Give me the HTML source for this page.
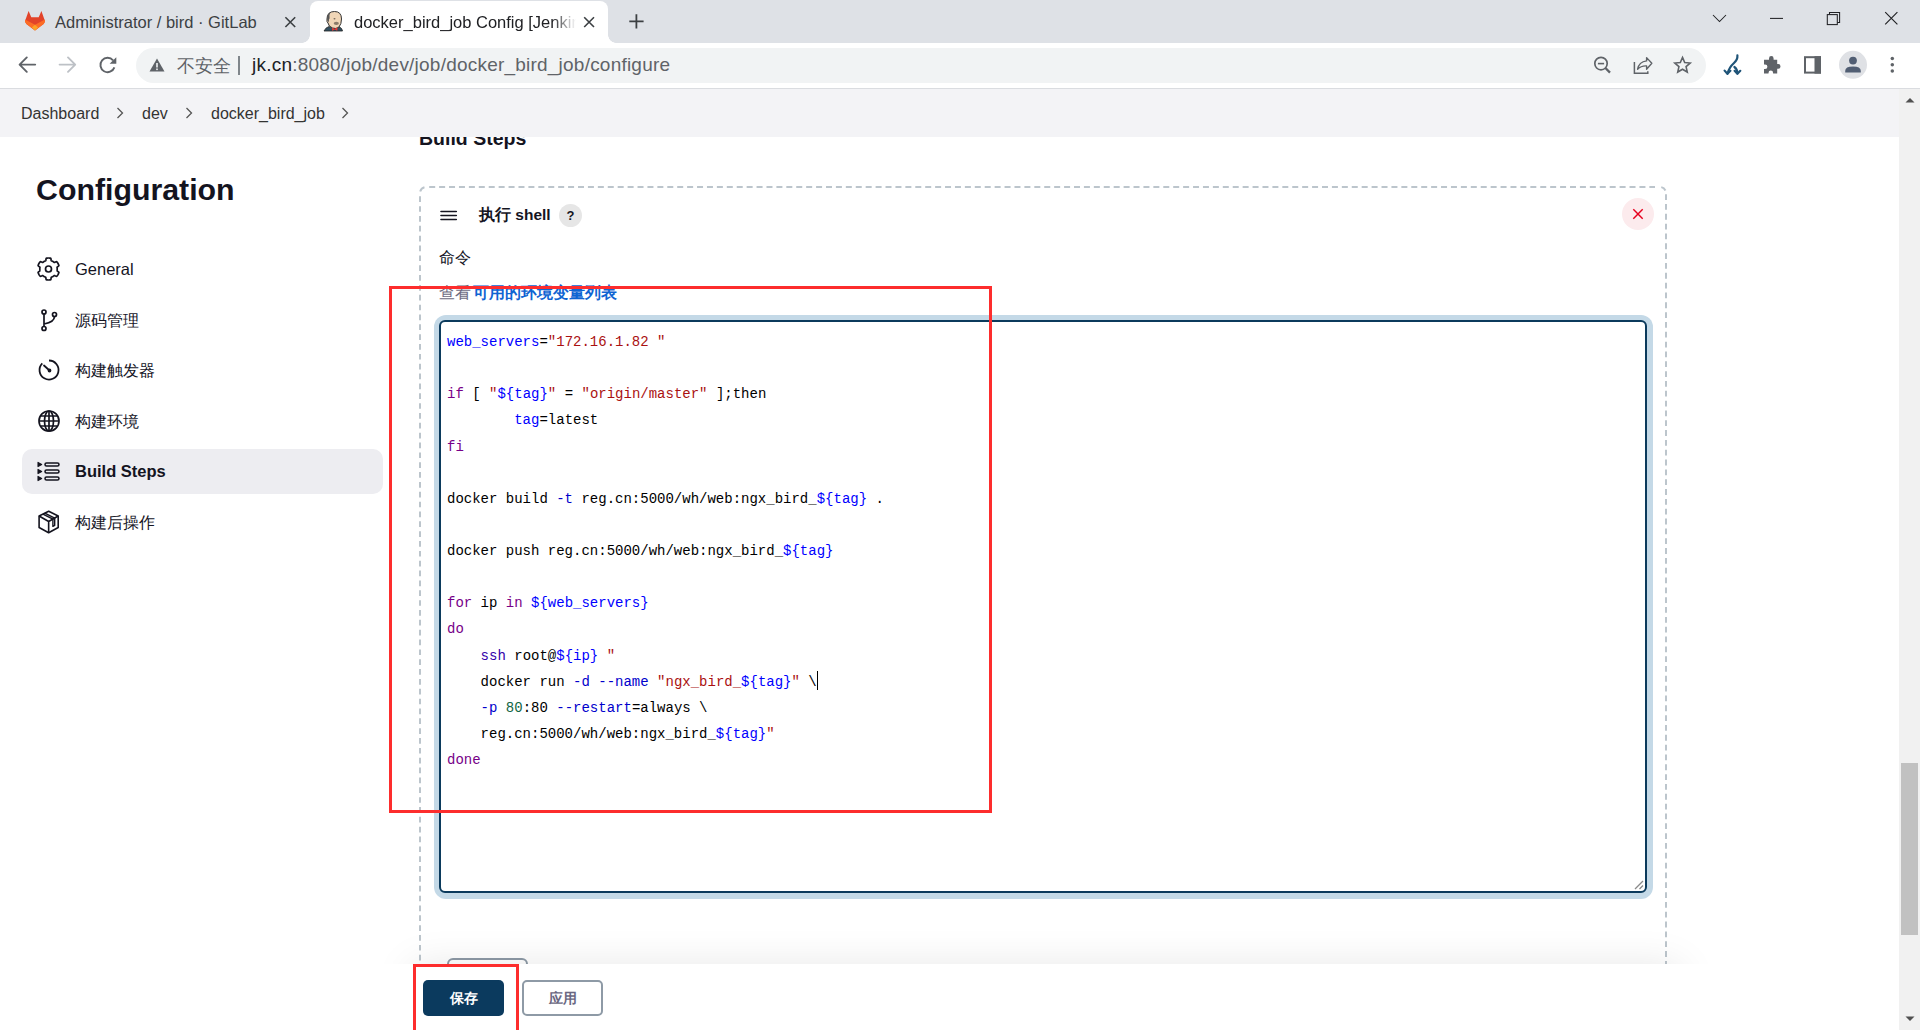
<!DOCTYPE html>
<html><head><meta charset="utf-8">
<style>
*{box-sizing:border-box;margin:0;padding:0}
html,body{width:1920px;height:1030px;overflow:hidden;background:#fff;font-family:"Liberation Sans",sans-serif;color:#14141f}
.abs{position:absolute}
/* chrome */
#tabstrip{position:absolute;left:0;top:0;width:1920px;height:43px;background:#dee1e6}
#toolbar{position:absolute;left:0;top:43px;width:1920px;height:45px;background:#fff}
#sep{position:absolute;left:0;top:88px;width:1920px;height:1px;background:#dadce0}
.tab{position:absolute;top:0;height:43px;font-size:15px;color:#202124}
#tab2{left:310px;width:298px;top:1px;height:42px;background:#fff;border-radius:8px 8px 0 0}
#tab2:before,#tab2:after{content:"";position:absolute;bottom:0;width:8px;height:8px;background:radial-gradient(circle at 0 0,transparent 8px,#fff 8.5px)}
#tab2:before{left:-8px;background:radial-gradient(circle at 0 0,transparent 7.5px,#fff 8px)}
#tab2:after{right:-8px;background:radial-gradient(circle at 100% 0,transparent 7.5px,#fff 8px)}
#omni{position:absolute;left:136px;top:48px;width:1570px;height:35px;border-radius:17.5px;background:#f1f3f4}
/* page */
#bc{position:absolute;z-index:5;left:0;top:89px;width:1899px;height:48px;background:#f3f3f6;font-size:16px;color:#14141f}
#scroll{position:absolute;left:1899px;top:89px;width:21px;height:941px;background:#f1f1f1}
#thumb{position:absolute;left:2px;top:674px;width:17px;height:172px;background:#c1c1c1}
.side{position:absolute;left:75px;font-size:16px;color:#14141f}
.code{position:absolute;left:447px;font-family:"Liberation Mono",monospace;font-size:14px;white-space:pre;color:#000}
.code{line-height:26.12px}.cur{display:inline-block;width:1px;height:19px;background:#000;vertical-align:-4px;margin-left:0}
.kw{color:#708}.df{color:#00f}.st{color:#a11}.at{color:#00c}.bi{color:#30a}.nu{color:#164}
</style></head><body>
<div id="tabstrip"></div>
<div id="toolbar"></div>
<div id="sep"></div>
<div id="tab2" class="tab"></div>
<div id="omni"></div>
<!-- tab 1 -->
<svg class="abs" style="left:24px;top:10px" width="22" height="22" viewBox="0 0 22 22">
 <path d="M4.6 1.1L7.3 7.2H14.7L17.4 1.1L20.7 10.3Q21.4 12.6 19.6 14L11 20.6L2.4 14Q0.6 12.6 1.3 10.3Z" fill="#e24329"/>
 <path d="M1 9.6L11 14.8V20.6L2.4 14Q0.5 12.5 1 9.6Z" fill="#fc6d26"/>
 <path d="M21 9.6L11 14.8V20.6L19.6 14Q21.5 12.5 21 9.6Z" fill="#fc6d26"/>
 <path d="M11 14.8L14.1 17.6L11 20.6L7.9 17.6Z" fill="#fca326"/>
</svg>
<div class="abs" style="left:55px;top:13px;font-size:16.5px;color:#3c4043;white-space:nowrap">Administrator / bird · GitLab</div>
<svg class="abs" style="left:283px;top:15px" width="14" height="14" viewBox="0 0 14 14"><path d="M2.4 2.2L12.2 12M12.2 2.2L2.4 12" stroke="#3c4043" stroke-width="1.6"/></svg>
<!-- tab 2 icon (jenkins) -->
<svg class="abs" style="left:323px;top:10px" width="22" height="22" viewBox="0 0 22 22">
 <path d="M1 21Q2.5 17.5 6 16.5L10 18L14 16.5Q18.5 16.5 19.5 21Z" fill="#335061" stroke="#222" stroke-width="0.8"/>
 <path d="M4 9Q4 1.5 11.5 1.5Q18.5 1.5 18.5 9Q18.5 14 16 17Q13 19.5 9.5 18Q5.5 16.5 5 13Q3.5 12 4 9Z" fill="#f0d6b7" stroke="#333" stroke-width="1"/>
 <path d="M4.2 9.5Q3.5 4 7.5 2.5Q5.8 5 6.6 8.2Q5.5 9.5 6 12Q4.5 11.5 4.2 9.5Z" fill="#555"/>
 <ellipse cx="13.3" cy="13.3" rx="2.6" ry="1.6" fill="#8a7a68"/>
 <ellipse cx="11.5" cy="8.8" rx="1" ry="0.8" fill="#7a6a5a"/>
 <path d="M9 17.5L11.5 19L14.5 17.2L14.3 20.8L11.5 19.5L9.3 21Z" fill="#e53935"/>
</svg>
<div class="abs" style="left:354px;top:13px;width:222px;overflow:hidden;font-size:16.5px;color:#202124;white-space:nowrap;-webkit-mask-image:linear-gradient(90deg,#000 calc(100% - 24px),transparent 100%)">docker_bird_job Config [Jenkins]</div>
<svg class="abs" style="left:582px;top:15px" width="14" height="14" viewBox="0 0 14 14"><path d="M2.2 2.2L12 12M12 2.2L2.2 12" stroke="#3c4043" stroke-width="1.6"/></svg>
<svg class="abs" style="left:626px;top:11px" width="20" height="20" viewBox="0 0 20 20"><path d="M10.4 3.2V17.5M3.3 10.4H17.6" stroke="#3c4043" stroke-width="1.8"/></svg>
<!-- window controls -->
<svg class="abs" style="left:1700px;top:0" width="220" height="40" viewBox="0 0 220 40" fill="none" stroke="#202124" stroke-width="1.05">
 <path d="M13 15L19.5 21.5L26 15"/>
 <path d="M70 18.4H83"/>
 <rect x="127.3" y="14.6" width="10" height="10"/>
 <path d="M129.5 14.6V12.4H139.6V22.5H137.3"/>
 <path d="M185.2 12.2L197.4 24.4M197.4 12.2L185.2 24.4" stroke-width="1.15"/>
</svg>
<!-- toolbar nav -->
<svg class="abs" style="left:10px;top:48px" width="120" height="36" viewBox="0 0 120 36" fill="none" stroke-width="1.9" stroke-linecap="round" stroke-linejoin="round">
 <path d="M25.2 16.6H9.8M16.8 9.4L9.6 16.6L16.8 23.8" stroke="#5f6368"/>
 <path d="M49.6 16.6H65M58 9.4L65.2 16.6L58 23.8" stroke="#bdc1c6"/>
 <path d="M104.4 19.4A7.2 7.2 0 1 1 103.1 12.3" stroke="#5f6368" stroke-linecap="butt"/>
 <path d="M99.6 15.8L106.3 9.2V15.8Z" fill="#5f6368" stroke="none"/>
</svg>
<!-- omnibox content -->
<svg class="abs" style="left:149px;top:57px" width="16" height="16" viewBox="0 0 16 16"><path d="M8 1.5L15.5 14.5H0.5Z" fill="#5f6368"/><rect x="7.2" y="6" width="1.6" height="4.5" fill="#f1f3f4"/><rect x="7.2" y="11.5" width="1.6" height="1.6" fill="#f1f3f4"/></svg>
<div class="abs" style="left:177px;top:54px;font-size:18px;color:#5f6368;white-space:nowrap">不安全</div>
<div class="abs" style="left:238px;top:56px;width:1.5px;height:19px;background:#80868b"></div>
<div class="abs" style="left:252px;top:54px;font-size:19px;letter-spacing:0.22px;color:#5f6368;white-space:nowrap"><span style="color:#202124">jk.cn</span>:8080/job/dev/job/docker_bird_job/configure</div>
<!-- omnibox right icons -->
<svg class="abs" style="left:1585px;top:48px" width="120" height="36" viewBox="0 0 120 36" fill="none" stroke="#5f6368">
 <circle cx="16" cy="15.6" r="6.2" stroke-width="1.7"/><path d="M12.9 15.6H19.1" stroke-width="1.6"/><path d="M20.4 20L25 24.6" stroke-width="2.3"/>
 <path d="M49.4 14V25.3H62.8V23.2" stroke-width="1.5"/>
 <path d="M52.6 21.2Q54 13.8 61.6 12.9V9.6L66.8 15.3L61.6 21.3V17.9Q56 17.6 52.6 21.2Z" stroke-width="1.4" stroke-linejoin="round"/>
 <path d="M97.50 9.40 L99.70 14.47 L105.20 15.00 L101.07 18.66 L102.26 24.05 L97.50 21.25 L92.74 24.05 L93.93 18.66 L89.80 15.00 L95.30 14.47Z" stroke-width="1.6" stroke-linejoin="miter"/>
</svg>
<!-- extension icons -->
<svg class="abs" style="left:1715px;top:45px" width="200" height="43" viewBox="0 0 200 43" fill="none">
 <path d="M22.4 10.4Q22.8 14.5 19 18Q14 22.5 12.5 28.6" stroke="#1f5478" stroke-width="2.2" stroke-linecap="round"/>
 <path d="M9.6 25.6L12.4 28.8L15.4 25.8" stroke="#1f5478" stroke-width="2.2" stroke-linecap="round" stroke-linejoin="round"/>
 <path d="M19.4 22Q22.3 23.8 22.4 28.4" stroke="#1f5478" stroke-width="2.2" stroke-linecap="round"/>
 <path d="M19.6 25.8L22.4 28.8L25.3 25.8" stroke="#1f5478" stroke-width="2.2" stroke-linecap="round" stroke-linejoin="round"/>
 <path d="M49 14.7H54V13.4A2.3 2.3 0 0 1 58.6 13.4V14.7H62.2V19.1H63.2A2.3 2.3 0 0 1 63.2 23.7H62.2V28.6H58.1V27.9A2.3 2.3 0 0 0 53.5 27.9V28.6H49V24.1H50.1A2.3 2.3 0 0 0 50.1 19.5H49Z" fill="#5f6368"/>
 <rect x="90" y="12.2" width="15" height="15.4" stroke="#5f6368" stroke-width="2"/><rect x="99.5" y="11.2" width="6.5" height="17.4" fill="#5f6368"/>
 <circle cx="138" cy="19.8" r="14" fill="#dfe1e5"/>
 <circle cx="138" cy="15.6" r="3.9" fill="#515e73"/>
 <path d="M130.2 27.6V26Q130.2 21.6 138 21.6Q145.8 21.6 145.8 26V27.6Z" fill="#515e73"/>
 <circle cx="177.3" cy="13.6" r="1.75" fill="#5f6368"/><circle cx="177.3" cy="19.8" r="1.75" fill="#5f6368"/><circle cx="177.3" cy="26" r="1.75" fill="#5f6368"/>
</svg>



<div id="content" class="abs" style="left:0;top:89px;width:1900px;height:941px;overflow:hidden">
 <div class="abs" style="left:419px;top:38px;font-size:19.5px;font-weight:bold;color:#14141f;white-space:nowrap">Build Steps</div>
 <div class="abs" style="left:36px;top:84px;font-size:30.3px;font-weight:bold;color:#14141f;white-space:nowrap">Configuration</div>
 <!-- sidebar -->
 <div class="abs" style="left:22px;top:360px;width:361px;height:45px;border-radius:10px;background:#ededf1"></div>
 <svg class="abs" style="left:36px;top:168px" width="25" height="24" viewBox="0 0 24 24" fill="none" stroke="#14141f" stroke-width="1.7" stroke-linejoin="round"><path d="M20.70 12.00 L20.70 12.23 L20.69 12.46 L20.67 12.68 L20.65 12.91 L20.63 13.14 L20.59 13.36 L20.55 13.59 L20.59 13.83 L20.96 14.15 L21.51 14.55 L22.06 14.98 L22.38 15.37 L22.37 15.67 L22.27 15.94 L22.16 16.21 L22.05 16.47 L21.93 16.74 L21.80 16.99 L21.67 17.25 L21.53 17.50 L21.38 17.75 L21.23 17.99 L21.07 18.23 L20.90 18.47 L20.73 18.70 L20.55 18.92 L20.36 19.14 L20.11 19.31 L19.61 19.22 L18.97 18.97 L18.34 18.68 L17.88 18.53 L17.65 18.62 L17.48 18.76 L17.30 18.90 L17.11 19.04 L16.93 19.17 L16.74 19.30 L16.55 19.42 L16.35 19.53 L16.15 19.65 L15.95 19.75 L15.75 19.85 L15.54 19.95 L15.33 20.04 L15.12 20.12 L14.90 20.20 L14.71 20.35 L14.62 20.83 L14.55 21.51 L14.45 22.20 L14.27 22.68 L14.00 22.82 L13.72 22.86 L13.44 22.91 L13.15 22.94 L12.86 22.97 L12.58 22.98 L12.29 23.00 L12.00 23.00 L11.71 23.00 L11.42 22.98 L11.14 22.97 L10.85 22.94 L10.56 22.91 L10.28 22.86 L10.00 22.82 L9.73 22.68 L9.55 22.20 L9.45 21.51 L9.38 20.83 L9.29 20.35 L9.10 20.20 L8.88 20.12 L8.67 20.04 L8.46 19.95 L8.25 19.85 L8.05 19.75 L7.85 19.65 L7.65 19.53 L7.45 19.42 L7.26 19.30 L7.07 19.17 L6.89 19.04 L6.70 18.90 L6.52 18.76 L6.35 18.62 L6.12 18.53 L5.66 18.68 L5.03 18.97 L4.39 19.22 L3.89 19.31 L3.64 19.14 L3.45 18.92 L3.27 18.70 L3.10 18.47 L2.93 18.23 L2.77 17.99 L2.62 17.75 L2.47 17.50 L2.33 17.25 L2.20 16.99 L2.07 16.74 L1.95 16.47 L1.84 16.21 L1.73 15.94 L1.63 15.67 L1.62 15.37 L1.94 14.98 L2.49 14.55 L3.04 14.15 L3.41 13.83 L3.45 13.59 L3.41 13.36 L3.37 13.14 L3.35 12.91 L3.33 12.68 L3.31 12.46 L3.30 12.23 L3.30 12.00 L3.30 11.77 L3.31 11.54 L3.33 11.32 L3.35 11.09 L3.37 10.86 L3.41 10.64 L3.45 10.41 L3.41 10.17 L3.04 9.85 L2.49 9.45 L1.94 9.02 L1.62 8.63 L1.63 8.33 L1.73 8.06 L1.84 7.79 L1.95 7.53 L2.07 7.26 L2.20 7.01 L2.33 6.75 L2.47 6.50 L2.62 6.25 L2.77 6.01 L2.93 5.77 L3.10 5.53 L3.27 5.30 L3.45 5.08 L3.64 4.86 L3.89 4.69 L4.39 4.78 L5.03 5.03 L5.66 5.32 L6.12 5.47 L6.35 5.38 L6.52 5.24 L6.70 5.10 L6.89 4.96 L7.07 4.83 L7.26 4.70 L7.45 4.58 L7.65 4.47 L7.85 4.35 L8.05 4.25 L8.25 4.15 L8.46 4.05 L8.67 3.96 L8.88 3.88 L9.10 3.80 L9.29 3.65 L9.38 3.17 L9.45 2.49 L9.55 1.80 L9.73 1.32 L10.00 1.18 L10.28 1.14 L10.56 1.09 L10.85 1.06 L11.14 1.03 L11.42 1.02 L11.71 1.00 L12.00 1.00 L12.29 1.00 L12.58 1.02 L12.86 1.03 L13.15 1.06 L13.44 1.09 L13.72 1.14 L14.00 1.18 L14.27 1.32 L14.45 1.80 L14.55 2.49 L14.62 3.17 L14.71 3.65 L14.90 3.80 L15.12 3.88 L15.33 3.96 L15.54 4.05 L15.75 4.15 L15.95 4.25 L16.15 4.35 L16.35 4.47 L16.55 4.58 L16.74 4.70 L16.93 4.83 L17.11 4.96 L17.30 5.10 L17.48 5.24 L17.65 5.38 L17.88 5.47 L18.34 5.32 L18.97 5.03 L19.61 4.78 L20.11 4.69 L20.36 4.86 L20.55 5.08 L20.73 5.30 L20.90 5.53 L21.07 5.77 L21.23 6.01 L21.38 6.25 L21.53 6.50 L21.67 6.75 L21.80 7.01 L21.93 7.26 L22.05 7.53 L22.16 7.79 L22.27 8.06 L22.37 8.33 L22.38 8.63 L22.06 9.02 L21.51 9.45 L20.96 9.85 L20.59 10.17 L20.55 10.41 L20.59 10.64 L20.63 10.86 L20.65 11.09 L20.67 11.32 L20.69 11.54 L20.70 11.77Z"/><circle cx="12" cy="12" r="3"/></svg>
 <div class="side" style="top:171px;font-size:16.5px">General</div>
 <svg class="abs" style="left:37px;top:219px" width="24" height="24" viewBox="0 0 24 24" fill="none" stroke="#14141f" stroke-width="1.7"><circle cx="7" cy="4" r="2"/><circle cx="7" cy="20.5" r="2"/><circle cx="17.5" cy="6.5" r="2"/><path d="M7 6V18.5M17.5 8.5Q17.5 14 7 16"/></svg>
 <div class="side" style="top:222px">源码管理</div>
 <svg class="abs" style="left:37px;top:269px" width="24" height="24" viewBox="0 0 24 24" fill="none" stroke="#14141f" stroke-width="1.8"><path d="M12 2.5A9.5 9.5 0 1 1 5.3 5.3"/><path d="M7 7.5L12.5 12.5" stroke-linecap="round"/><circle cx="12.5" cy="12.5" r="1" fill="#14141f"/></svg>
 <div class="side" style="top:272px">构建触发器</div>
 <svg class="abs" style="left:37px;top:320px" width="24" height="24" viewBox="0 0 24 24" fill="none" stroke="#14141f" stroke-width="1.7"><circle cx="12" cy="12" r="10"/><ellipse cx="12" cy="12" rx="4.5" ry="10"/><path d="M2 12H22M3.5 7H20.5M3.5 17H20.5M12 2V22"/></svg>
 <div class="side" style="top:323px">构建环境</div>
 <svg class="abs" style="left:37px;top:371px" width="24" height="24" viewBox="0 0 24 24" fill="#14141f" stroke="#14141f"><path d="M1 2.4L4.7 4.5L1 6.6Z M1 9.4L4.7 11.5L1 13.6Z M1 16.4L4.7 18.5L1 20.6Z" stroke-width="1.1" stroke-linejoin="round"/><g fill="none" stroke-width="1.55"><rect x="8" y="2.9" width="14" height="3.1" rx="1.55"/><rect x="8" y="9.9" width="14" height="3.1" rx="1.55"/><rect x="8" y="16.9" width="14" height="3.1" rx="1.55"/></g></svg>
 <div class="side" style="top:373px;font-weight:bold;font-size:16.5px">Build Steps</div>
 <svg class="abs" style="left:37px;top:420px" width="24" height="26" viewBox="0 0 24 26" fill="none" stroke="#14141f" stroke-width="1.6" stroke-linejoin="round"><path d="M11.65 2.2L21.2 7V18.5L11.65 23.7L2.1 18.5V7Z"/><path d="M2.1 7L11.65 12.5L21.2 7M11.65 12.5V23.7"/><path d="M5.9 5.1L15.9 10.1V17.4L17.7 16.4V9.1L7.8 4.1" stroke-width="1.4"/></svg>
 <div class="side" style="top:424px">构建后操作</div>

 <!-- card -->
 <svg class="abs" style="left:0;top:0" width="1900" height="941" fill="none" stroke="#bcc5cc" stroke-width="2"><path d="M429.2 98.0H1655" stroke-dasharray="6 3.92"/><path d="M420 107.3V1030" stroke-dasharray="5.7 4.15"/><path d="M1666 105.2V1030" stroke-dasharray="5.8 4.03"/><path d="M420.20 102.45 A6 6 0 0 1 424.45 98.20"/><path d="M1661.25 98.13 A6 6 0 0 1 1665.44 101.46"/></svg>
 <svg class="abs" style="left:438px;top:120px" width="22" height="14" viewBox="0 0 22 14"><path d="M3 2.5H18.3M3 6.5H18.3M3 10.5H18.3" stroke="#14141f" stroke-width="1.6" stroke-linecap="round"/></svg>
 <div class="abs" style="left:479px;top:116px;font-size:15.5px;font-weight:bold;color:#14141f;white-space:nowrap">执行 shell</div>
 <div class="abs" style="left:559px;top:115px;width:23px;height:23px;border-radius:50%;background:#e6e6e6;font-size:13px;font-weight:bold;text-align:center;line-height:23px;color:#14141f">?</div>
 <div class="abs" style="left:1622px;top:109px;width:32px;height:32px;border-radius:50%;background:#fcebed"></div>
 <svg class="abs" style="left:1632px;top:119px" width="12" height="12" viewBox="0 0 12 12"><path d="M1.3 1.3L10.7 10.7M10.7 1.3L1.3 10.7" stroke="#e6001e" stroke-width="1.45"/></svg>
 <div class="abs" style="left:439px;top:159px;font-size:15.5px;color:#14141f;white-space:nowrap">命令</div>
 <div class="abs" style="left:439px;top:194px;font-size:15.5px;color:#6d6b7f;white-space:nowrap">查看</div><div class="abs" style="left:473px;top:194px;font-size:15.6px;font-weight:bold;color:#0f64d2;white-space:nowrap">可用的环境变量列表</div>

 <!-- textarea -->
 <div class="abs" style="left:434px;top:226px;width:1219px;height:584px;border-radius:12px;background:#c4d9e7"></div>
 <div class="abs" style="left:439px;top:231px;width:1208px;height:573px;border-radius:6px;border:2px solid #0b3a5c;background:#fff"></div>
 <svg class="abs" style="left:1634px;top:791px" width="10" height="10" viewBox="0 0 10 10"><path d="M1 9L9 1M5.5 9L9 5.5" stroke="#8a8a8a" stroke-width="1.3"/></svg>
 <div class="code" style="top:240px"><span class="df">web_servers</span>=<span class="st">"172.16.1.82 "</span>

<span class="kw">if</span> [ <span class="st">"</span><span class="df">${tag}</span><span class="st">"</span> = <span class="st">"origin/master"</span> ];then
        <span class="df">tag</span>=latest
<span class="kw">fi</span>

docker build <span class="at">-t</span> reg.cn:5000/wh/web:ngx_bird_<span class="df">${tag}</span> .

docker push reg.cn:5000/wh/web:ngx_bird_<span class="df">${tag}</span>

<span class="kw">for</span> ip <span class="kw">in</span> <span class="df">${web_servers}</span>
<span class="kw">do</span>
    <span class="bi">ssh</span> root@<span class="df">${ip}</span> <span class="st">"</span>
    docker run <span class="at">-d</span> <span class="at">--name</span> <span class="st">"ngx_bird_</span><span class="df">${tag}</span><span class="st">"</span> \<span class="cur"></span>
    <span class="at">-p</span> <span class="nu">80</span>:80 <span class="at">--restart</span>=always \
    reg.cn:5000/wh/web:ngx_bird_<span class="df">${tag}</span><span class="st">"</span>
<span class="kw">done</span></div>

 <!-- bottom bar -->
 <div class="abs" style="left:447px;top:869px;width:81px;height:40px;border:2px solid #8d9aa6;border-radius:6px;background:#fff"></div>
 <div class="abs" style="left:412px;top:877px;width:1268px;height:80px;box-shadow:0 0 40px rgba(0,0,0,0.1);background:#fff"></div>
 <div class="abs" style="left:0;top:875px;width:1900px;height:66px;background:#fff"></div>
 <div class="abs" style="left:423px;top:891px;width:81px;height:36px;border-radius:5px;background:#0b3a5e;color:#fff;font-size:14px;font-weight:bold;text-align:center;line-height:36px">保存</div>
 <div class="abs" style="left:522px;top:891px;width:81px;height:36px;border-radius:5px;border:2px solid #8e9aa6;background:#fff;color:#6a6782;font-size:14px;font-weight:bold;text-align:center;line-height:32px">应用</div>

 <!-- annotations -->
 <div class="abs" style="left:389px;top:197px;width:603px;height:527px;border:3px solid #fd2d2d"></div>
 <div class="abs" style="left:413px;top:875px;width:106px;height:80px;border:3px solid #fd2d2d"></div>
</div>

<div id="bc"><!-- breadcrumb -->
<div class="abs" style="left:21px;top:16px;font-size:16px;color:#333;white-space:nowrap">Dashboard</div>
<svg class="abs" style="left:114px;top:17px" width="12" height="14" viewBox="0 0 12 14"><path d="M3.5 2L8.5 7L3.5 12" stroke="#555" stroke-width="1.3" fill="none"/></svg>
<div class="abs" style="left:142px;top:16px;font-size:16px;color:#333;white-space:nowrap">dev</div>
<svg class="abs" style="left:183px;top:17px" width="12" height="14" viewBox="0 0 12 14"><path d="M3.5 2L8.5 7L3.5 12" stroke="#555" stroke-width="1.3" fill="none"/></svg>
<div class="abs" style="left:211px;top:16px;font-size:16px;color:#333;white-space:nowrap">docker_bird_job</div>
<svg class="abs" style="left:339px;top:17px" width="12" height="14" viewBox="0 0 12 14"><path d="M3.5 2L8.5 7L3.5 12" stroke="#555" stroke-width="1.3" fill="none"/></svg>


</div>
<div id="scroll"><div id="thumb"></div><svg class="abs" style="left:6px;top:8px" width="10" height="6" viewBox="0 0 10 6"><path d="M0.5 5.5L5 1L9.5 5.5Z" fill="#505050"/></svg><svg class="abs" style="left:6px;top:927px" width="10" height="6" viewBox="0 0 10 6"><path d="M0.5 0.5L5 5L9.5 0.5Z" fill="#505050"/></svg></div>
</body></html>
